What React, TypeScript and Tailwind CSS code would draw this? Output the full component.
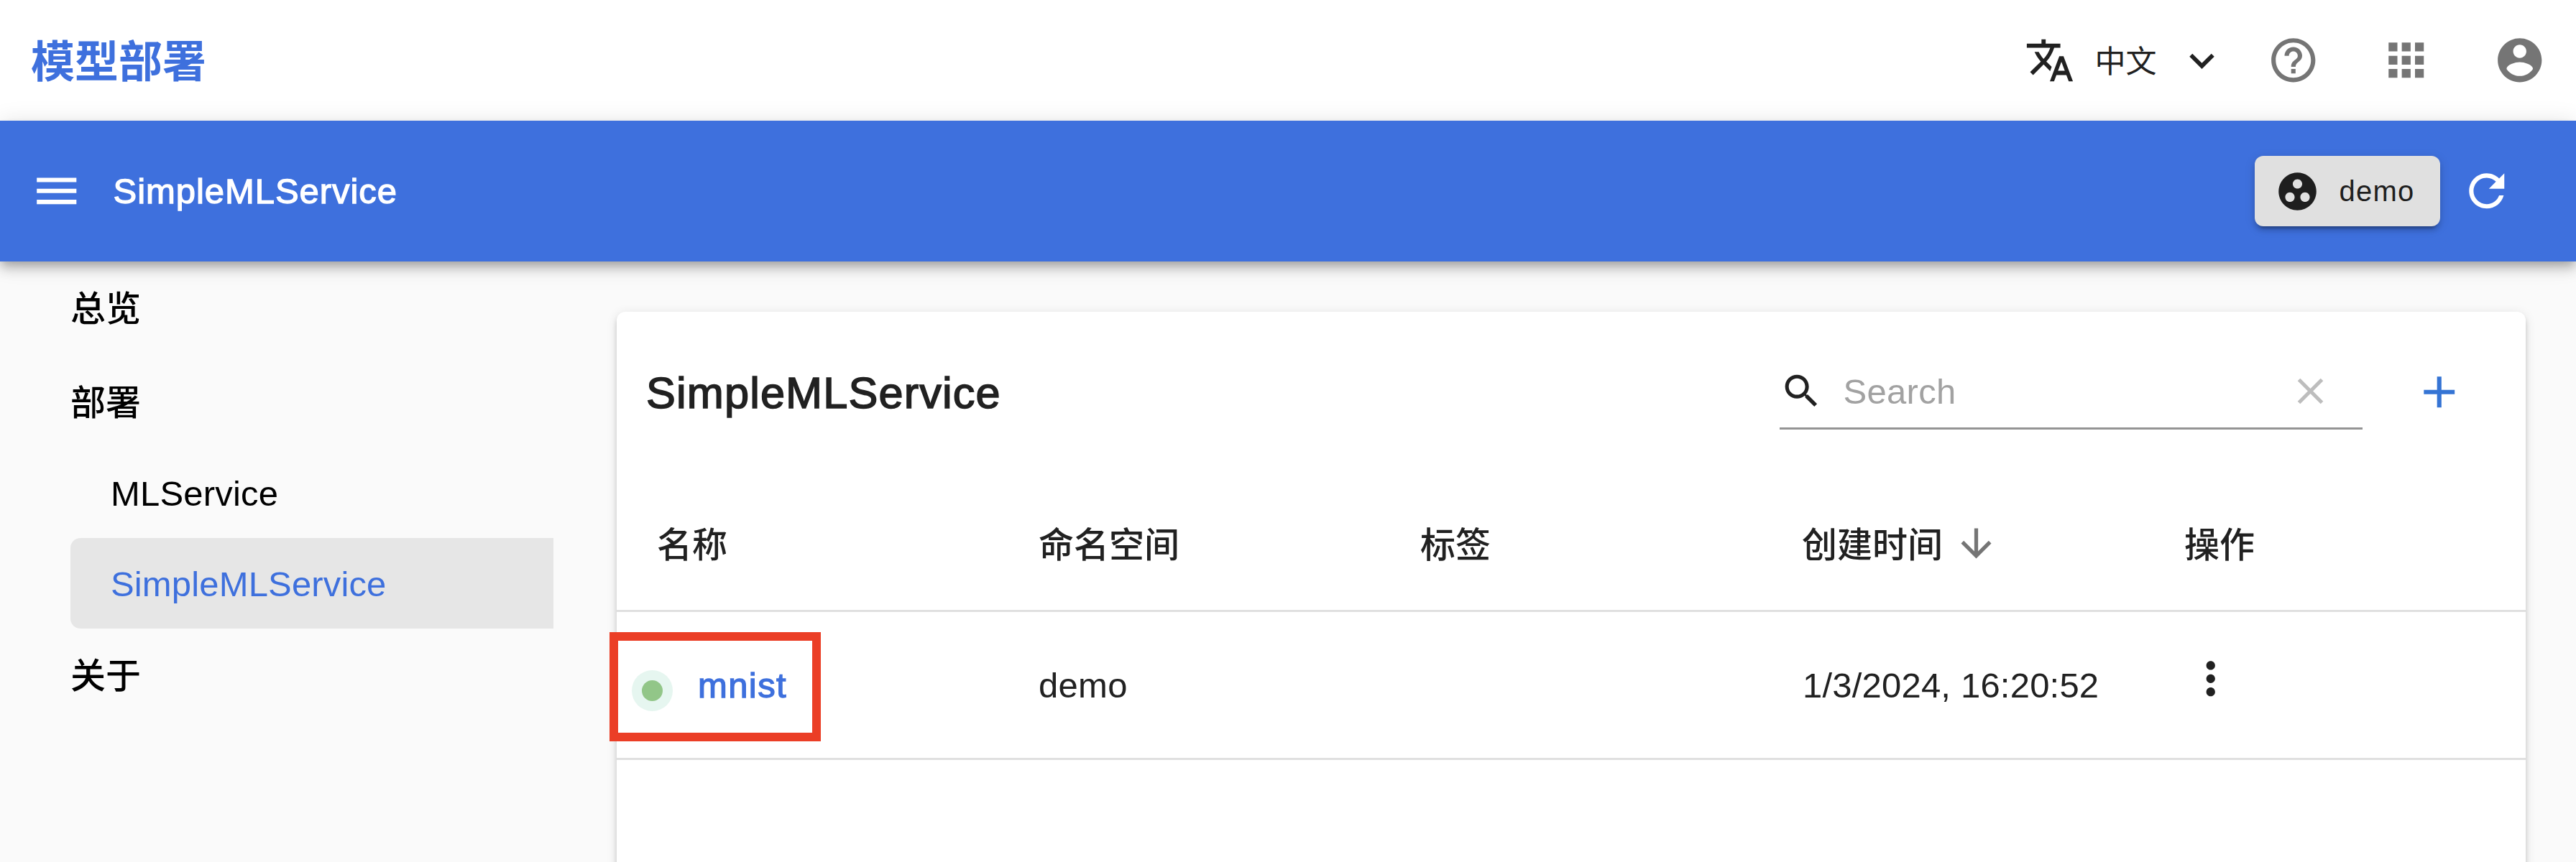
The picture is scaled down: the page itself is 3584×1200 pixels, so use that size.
import React from "react";

type IconProps = { d: string; className: string };

function Icon({ d, className }: IconProps) {
  return (
    <svg viewBox="0 0 24 24" fill="currentColor" className={`block shrink-0 ${className}`} aria-hidden="true">
      <path d={d} />
    </svg>
  );
}

const icons = {
  translate:
    "M12.87 15.07l-2.54-2.51.03-.03c1.74-1.94 2.98-4.17 3.71-6.53H17V4h-7V2H8v2H1v1.99h11.17C11.5 7.92 10.44 9.75 9 11.35 8.07 10.32 7.3 9.19 6.69 8h-2c.73 1.63 1.73 3.17 2.98 4.56l-5.09 5.02L4 19l5-5 3.11 3.11.76-2.04zM18.5 10h-2L12 22h2l1.12-3h4.75L21 22h2l-4.5-12zm-2.62 7l1.62-4.33L19.12 17h-3.24z",
  expand: "M16.59 8.59L12 13.17 7.41 8.59 6 10l6 6 6-6z",
  help: "M11 18h2v-2h-2v2zm1-16C6.48 2 2 6.48 2 12s4.48 10 10 10 10-4.48 10-10S17.52 2 12 2zm0 18c-4.41 0-8-3.59-8-8s3.59-8 8-8 8 3.59 8 8-3.59 8-8 8zm0-14c-2.21 0-4 1.79-4 4h2c0-1.1.9-2 2-2s2 .9 2 2c0 2-3 1.75-3 5h2c0-2.25 3-2.5 3-5 0-2.21-1.79-4-4-4z",
  apps: "M4 8h4V4H4v4zm6 12h4v-4h-4v4zm-6 0h4v-4H4v4zm0-6h4v-4H4v4zm6 0h4v-4h-4v4zm6-10v4h4V4h-4zm-6 4h4V4h-4v4zm6 6h4v-4h-4v4zm0 6h4v-4h-4v4z",
  account:
    "M12 2C6.48 2 2 6.48 2 12s4.48 10 10 10 10-4.48 10-10S17.52 2 12 2zm0 3c1.66 0 3 1.34 3 3s-1.34 3-3 3-3-1.34-3-3 1.34-3 3-3zm0 14.2c-2.5 0-4.71-1.28-6-3.22.03-1.99 4-3.08 6-3.08 1.99 0 5.97 1.09 6 3.08-1.29 1.94-3.5 3.22-6 3.22z",
  menu: "M3 18h18v-2H3v2zm0-5h18v-2H3v2zm0-7v2h18V6H3z",
  groupWork:
    "M12 2C6.48 2 2 6.48 2 12s4.48 10 10 10 10-4.48 10-10S17.52 2 12 2zM8 17.5c-1.38 0-2.5-1.12-2.5-2.5s1.12-2.5 2.5-2.5 2.5 1.12 2.5 2.5-1.12 2.5-2.5 2.5zM9.5 8c0-1.38 1.12-2.5 2.5-2.5s2.5 1.12 2.5 2.5-1.12 2.5-2.5 2.5S9.5 9.38 9.5 8zm6.5 9.5c-1.38 0-2.5-1.12-2.5-2.5s1.12-2.5 2.5-2.5 2.5 1.12 2.5 2.5-1.12 2.5-2.5 2.5z",
  refresh:
    "M17.65 6.35C16.2 4.9 14.21 4 12 4c-4.42 0-7.99 3.58-7.99 8s3.57 8 7.99 8c3.73 0 6.84-2.55 7.73-6h-2.08c-.82 2.33-3.04 4-5.65 4-3.31 0-6-2.69-6-6s2.69-6 6-6c1.66 0 3.14.69 4.22 1.78L13 11h7V4l-2.35 2.35z",
  search:
    "M15.5 14h-.79l-.28-.27C15.41 12.59 16 11.11 16 9.5 16 5.91 13.09 3 9.5 3S3 5.91 3 9.5 5.91 16 9.5 16c1.61 0 3.09-.59 4.23-1.57l.27.28v.79l5 4.99L20.49 19l-4.99-5zm-6 0C7.01 14 5 11.99 5 9.5S7.01 5 9.5 5 14 7.01 14 9.5 11.99 14 9.5 14z",
  close:
    "M19 6.41L17.59 5 12 10.59 6.41 5 5 6.41 10.59 12 5 17.59 6.41 19 12 13.41 17.59 19 19 17.59 13.41 12z",
  add: "M19 13h-6v6h-2v-6H5v-2h6V5h2v6h6v2z",
  down: "M20 12l-1.41-1.41L13 16.17V4h-2v12.17l-5.58-5.59L4 12l8 8 8-8z",
  more: "M12 8c1.1 0 2-.9 2-2s-.9-2-2-2-2 .9-2 2 .9 2 2 2zm0 2c-1.1 0-2 .9-2 2s.9 2 2 2 2-.9 2-2-.9-2-2-2zm0 6c-1.1 0-2 .9-2 2s.9 2 2 2 2-.9 2-2-.9-2-2-2z",
};

function Header() {
  return (
    <header className="flex h-[168px] items-center bg-white pr-[42px] pl-[43px]">
      <h1 className="mt-[6px] text-[61px] leading-none font-bold text-[#3e70dd]">模型部署</h1>
      <div className="ml-auto flex items-center text-[#757575]">
        <div className="flex items-center text-[#212121]">
          <Icon d={icons.translate} className="size-[70px]" />
          <span className="mt-[4px] ml-[28px] text-[43px] leading-none">中文</span>
          <Icon d={icons.expand} className="ml-[28px] size-[69px]" />
        </div>
        <Icon d={icons.help} className="ml-[56px] size-[73.5px]" />
        <Icon d={icons.apps} className="ml-[84px] size-[73.5px]" />
        <Icon d={icons.account} className="ml-[84px] size-[73.5px]" />
      </div>
    </header>
  );
}

function Toolbar() {
  return (
    <div className="relative z-10 flex h-[196px] items-center bg-[#3e70dd] pr-[88px] pl-[42px] text-white shadow-[0_6px_12px_-3px_rgba(0,0,0,0.2),0_12px_15px_0_rgba(0,0,0,0.14),0_3px_31px_0_rgba(0,0,0,0.12)]">
      <Icon d={icons.menu} className="size-[73.5px]" />
      <span className="mt-[1px] ml-[42px] text-[49px] leading-none tracking-[0.95px] [-webkit-text-stroke:1.3px_currentColor]">
        SimpleMLService
      </span>
      <button className="ml-auto flex h-[98px] w-[258px] items-center rounded-[12px] bg-[#e0e0e0] pl-[28px] text-[#1e1e1e] shadow-[0_9px_3px_-6px_rgba(0,0,0,0.2),0_6px_6px_0_rgba(0,0,0,0.14),0_3px_15px_0_rgba(0,0,0,0.12)]">
        <Icon d={icons.groupWork} className="size-[63px]" />
        <span className="ml-[27px] text-[40px] leading-none tracking-[1.2px]">demo</span>
      </button>
      <Icon d={icons.refresh} className="ml-[28px] size-[73.5px]" />
    </div>
  );
}

function Sidebar() {
  return (
    <nav className="flex w-[770px] shrink-0 flex-col pl-[98px] text-[49px] leading-none text-black">
      <a className="flex h-[132px] items-center font-medium">总览</a>
      <a className="flex h-[127px] items-center pt-[3px] font-medium">部署</a>
      <a className="flex h-[126px] items-center pt-[2px] pl-[56px] tracking-[0.2px]">MLService</a>
      <a className="flex h-[126px] items-center rounded-l-[14px] bg-[#e6e6e6] pt-[2px] pl-[56px] tracking-[0.15px] text-[#3e70dd]">
        SimpleMLService
      </a>
      <a className="flex h-[131px] items-center pt-[2px] font-medium">关于</a>
    </nav>
  );
}

function ServiceCard() {
  return (
    <section className="mt-[70px] ml-[88px] h-[900px] w-[2656px] shrink-0 rounded-[12px] bg-white text-[#212121] shadow-[0_9px_3px_-6px_rgba(0,0,0,0.2),0_6px_6px_0_rgba(0,0,0,0.14),0_3px_15px_0_rgba(0,0,0,0.12)]">
      <div className="flex h-[230px] items-start pt-[58px] pr-[84px] pl-[41px]">
        <h2 className="mt-[25px] text-[61.25px] leading-none tracking-[1.15px] [-webkit-text-stroke:1.6px_currentColor]">
          SimpleMLService
        </h2>
        <div className="ml-auto flex h-[106px] w-[811px] items-center border-b-[3px] border-[#949494]">
          <Icon d={icons.search} className="mt-[2px] size-[61px]" />
          <span className="mt-[3px] ml-[28px] text-[49px] leading-none tracking-[0.3px] text-[#a2a2a2]">Search</span>
          <Icon d={icons.close} className="mt-[2px] mr-[42px] ml-auto size-[61px] text-[#bdbdbd]" />
        </div>
        <Icon d={icons.add} className="mt-[17px] ml-[70px] size-[73.5px] text-[#3574d4]" />
      </div>
      <div className="grid h-[188px] grid-cols-[531px_531px_531px_532px_auto] items-center border-b-[3px] border-[#e0e0e0] pl-[56px] text-[49px] leading-none font-medium">
        <span className="pt-[5px]">名称</span>
        <span className="pt-[5px]">命名空间</span>
        <span className="pt-[5px]">标签</span>
        <span className="flex items-center">
          <span className="pt-[5px]">创建时间</span>
          <Icon d={icons.down} className="ml-[15px] size-[63px] text-[#757575]" />
        </span>
        <span className="pt-[5px]">操作</span>
      </div>
      <div className="relative grid h-[206px] grid-cols-[531px_531px_531px_532px_auto] items-center border-b-[3px] border-[#e0e0e0] pl-[56px] text-[49px] leading-none">
        <span className="-ml-[35px] flex items-center">
          <span className="mt-[15px] flex size-[57px] items-center justify-center rounded-full bg-[#e6f6f0]">
            <span className="size-[29px] rounded-full bg-[#92c688]" />
          </span>
          <a className="mt-[2px] ml-[35px] tracking-[1.4px] text-[#3e70dd] [-webkit-text-stroke:1.3px_currentColor]">
            mnist
          </a>
        </span>
        <span className="pt-[2px] tracking-[0.3px]">demo</span>
        <span />
        <span className="pt-[2px] pl-px tracking-[0.2px]">1/3/2024, 16:20:52</span>
        <Icon d={icons.more} className="-mt-[18px] size-[73.5px]" />
        <div className="absolute top-[28px] -left-[10px] h-[152px] w-[294px] border-[12px] border-[#eb3e26]" />
      </div>
    </section>
  );
}

export default function App() {
  return (
    <div
      lang="zh-CN"
      className="flex h-[1200px] w-[3584px] flex-col overflow-hidden bg-[#fafafa] font-['Liberation_Sans','Noto_Sans_CJK_SC',sans-serif]"
    >
      <Header />
      <Toolbar />
      <div className="flex min-h-0 flex-1 items-start overflow-hidden">
        <Sidebar />
        <ServiceCard />
      </div>
    </div>
  );
}
